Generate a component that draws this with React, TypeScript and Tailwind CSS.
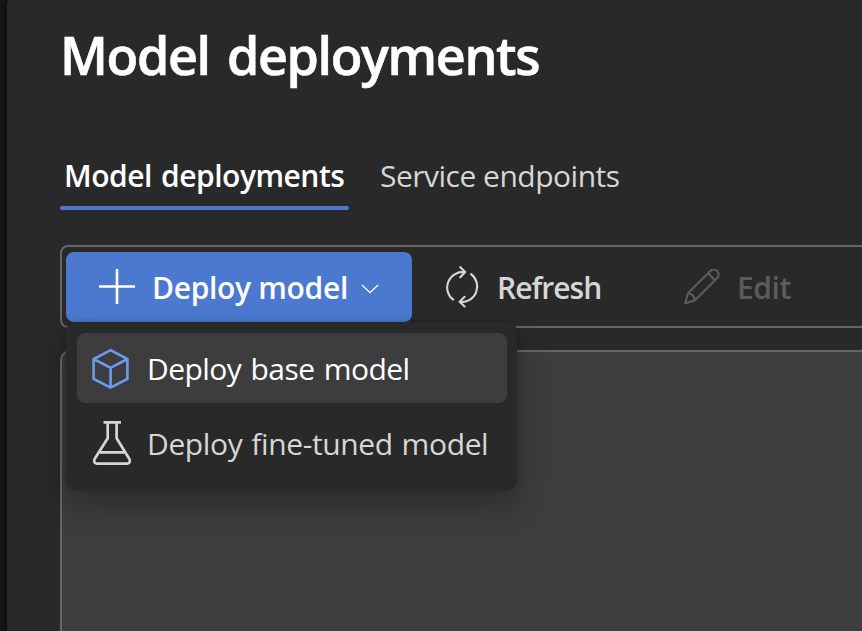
import type { ReactNode } from "react";

function Label({ children, className }: { children: ReactNode; className: string }) {
  return <span className={`block whitespace-nowrap ${className}`}>{children}</span>;
}

function PlusIcon() {
  return (
    <svg className="h-9 w-9 shrink-0" viewBox="0 0 36 36" fill="none" stroke="currentColor" strokeWidth="2.6">
      <path d="M0 17.5H36M18 0V35" />
    </svg>
  );
}

function ChevronIcon() {
  return (
    <svg className="h-[10px] w-[18px] shrink-0" viewBox="0 0 18 10" fill="none" stroke="currentColor" strokeWidth="1.3">
      <path d="M1 1L9 8.7L17 1" />
    </svg>
  );
}

function RefreshIcon() {
  return (
    <svg className="h-[42px] w-[36px] shrink-0" viewBox="0 0 36 42" fill="none" stroke="currentColor" strokeWidth="2.1" strokeLinecap="round" strokeLinejoin="round">
      <path d="M9.2 33.7A16 15.6 0 0 1 20.9 6M16.3 1.2L21.2 6L16.3 11.2" />
      <path d="M27.1 8.1A15.6 15.6 0 0 1 15.9 36M20.6 30.8L15.6 35.8L20.6 40.5" />
    </svg>
  );
}

function PencilIcon() {
  return (
    <svg className="h-9 w-9 shrink-0" viewBox="0 0 36 36" fill="none" stroke="currentColor" strokeWidth="2.1" strokeLinejoin="round">
      <path d="M1.3 34.2L3.9 24.3L26.3 2.1A4.8 4.8 0 0 1 33.3 8.9L11 31.2Z" />
      <path d="M24 4.3L31.2 11.5M3.9 24.3Q9.8 25 11 31.2" />
    </svg>
  );
}

function CubeIcon() {
  return (
    <svg className="mt-[2px] h-[42px] w-[37px] shrink-0" viewBox="0 0 37 42" fill="none" stroke="currentColor" strokeWidth="2.6">
      <path d="M18.6 2.2L35.4 11V31L18.6 39.6L1.6 31V11ZM1.6 11L18.6 19.8L35.4 11M18.6 19.8V39.6" />
    </svg>
  );
}

function FlaskIcon() {
  return (
    <svg className="h-[46px] w-[40px] shrink-0" viewBox="0 0 40 46" fill="none" stroke="currentColor" strokeWidth="2.7" strokeLinejoin="round">
      <path d="M11.5 2.4H29M15.7 2.4V18.2L2.9 38.5C1.2 41.2 2.2 43.6 5 43.6H35C37.8 43.6 38.8 41.2 37.1 38.5L24.6 18.2V2.4M8 32.3H32.5" />
    </svg>
  );
}

export default function App() {
  return (
    <div className="flex h-[631px] w-[862px] overflow-hidden bg-[#141414] font-['Open_Sans','Noto_Sans',sans-serif] text-[#d6d6d6]">
      <div className="w-[7px] shrink-0 bg-linear-to-r from-[#161616] to-[#101010]" />
      <main className="flex min-w-0 grow flex-col rounded-tl-[4px] bg-[#292929] pl-[53px]">
        <h1 className="h-[92px] shrink-0 pt-[19px] text-white">
          <Label className="text-[52px] leading-[72px] font-semibold tracking-[-1.35px] [word-spacing:5px] [-webkit-text-stroke:0.6px_white]">Model deployments</Label>
        </h1>
        <nav className="mt-[52px] flex h-[66px] shrink-0 gap-[27px]">
          <div className="flex w-[289px] flex-col justify-between text-white">
            <Label className="h-[62px] pl-1 text-[30px] leading-[64px] font-semibold tracking-[-0.5px] [word-spacing:2px]">Model deployments</Label>
            <div className="h-1 shrink-0 rounded-full bg-[#4a79cf]" />
          </div>
          <Label className="pl-1 text-[30px] leading-[64px] tracking-[-0.5px]">Service endpoints</Label>
        </nav>
        <div className="relative mt-[35px] flex h-[83px] shrink-0 rounded-l-[8px] border-2 border-r-0 border-[#666] pt-[5px] pl-1">
          <button className="flex h-[70px] w-[346px] items-center rounded-[8px] bg-[#4a79cf] pl-[33px] text-white">
            <PlusIcon />
            <Label className="ml-[17px] w-[196px] pt-[2px] text-[30px] leading-10 font-semibold tracking-[-0.32px]">Deploy model</Label>
            <span className="ml-[13px] pt-1">
              <ChevronIcon />
            </span>
          </button>
          <button className="ml-8 flex h-[70px] w-[240px] items-center">
            <RefreshIcon />
            <Label className="ml-[17px] pt-[2px] text-[30px] leading-10 font-semibold tracking-[-1px]">Refresh</Label>
          </button>
          <button className="flex h-[70px] items-center text-[#5c5c5c]">
            <PencilIcon />
            <Label className="ml-[17px] pt-[2px] text-[30px] leading-10 font-semibold tracking-[-0.4px]">Edit</Label>
          </button>
          <div className="absolute top-[75px] left-1 z-10 flex h-[167px] w-[451px] flex-col gap-[5px] rounded-[9px] bg-[#292929] pt-[11px] pl-[11px] shadow-[0_16px_32px_rgba(0,0,0,0.28),0_0_4px_rgba(0,0,0,0.24)]">
            <div className="flex h-[70px] w-[430px] items-center rounded-[8px] bg-[#3d3d3d] pl-[15px] text-white">
              <span className="text-[#6b9cf0]">
                <CubeIcon />
              </span>
              <Label className="ml-[18px] pt-[2px] text-[30px] leading-10 tracking-[-0.55px] [word-spacing:2px]">Deploy base model</Label>
            </div>
            <div className="flex h-[70px] w-[430px] items-center pl-[15px]">
              <FlaskIcon />
              <Label className="ml-[15px] pt-[2px] text-[30px] leading-10 tracking-[-0.38px] [word-spacing:1.5px]">Deploy fine-tuned model</Label>
            </div>
          </div>
        </div>
        <section className="mt-[22px] h-[300px] shrink-0 rounded-tl-[10px] border-t-2 border-l-2 border-[#666] bg-[#3d3d3d]" />
      </main>
    </div>
  );
}
